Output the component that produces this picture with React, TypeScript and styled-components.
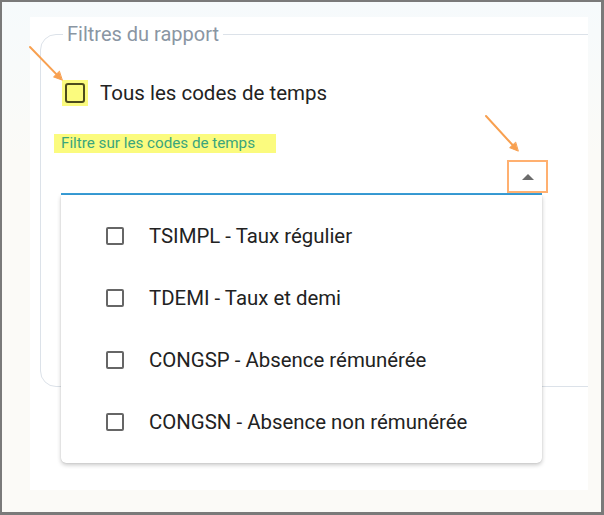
import { FC, ReactElement } from 'react';
import styled, { createGlobalStyle } from 'styled-components';

const GlobalStyle = createGlobalStyle`
    html, body {
        margin: 0;
        padding: 0;
        background: #ffffff;
    }
    * {
        box-sizing: border-box;
    }
`;

const codes: string[] = [
    'TSIMPL - Taux régulier',
    'TDEMI - Taux et demi',
    'CONGSP - Absence rémunérée',
    'CONGSN - Absence non rémunérée',
];

const Frame = styled('div')((): any => ({
    position: 'relative',
    width: '604px',
    height: '515px',
    border: '2px solid #7a7a7a',
    borderRightWidth: '3px',
    borderBottomWidth: '3px',
    background: 'linear-gradient(180deg, #f6fafc 0%, #fbfaf7 30%, #fbfaf7 100%)',
    padding: '15px 0 0 28px',
    fontFamily: 'Roboto, "Noto Sans", sans-serif',
}));

const Panel = styled('div')((): any => ({
    position: 'relative',
    width: '558px',
    height: '473px',
    background: '#ffffff',
    overflow: 'hidden',
    paddingTop: '6px',
    paddingLeft: '10px',
}));

const Fieldset = styled('fieldset')((): any => ({
    margin: 0,
    padding: '0 0 0 13px',
    width: '600px',
    height: '364px',
    border: '1px solid #dce2e9',
    borderRadius: '16px',
    minWidth: 0,
}));

const Legend = styled('legend')((): any => ({
    marginLeft: '9px',
    padding: '0 4px',
    fontSize: '20px',
    lineHeight: '22px',
    color: '#8a96a3',
}));

const CheckRow = styled('div')((): any => ({
    display: 'flex',
    alignItems: 'center',
    marginTop: '35px',
    marginLeft: '8px',
    gap: '12px',
}));

const Highlight = styled('span')((): any => ({
    display: 'inline-flex',
    alignItems: 'center',
    justifyContent: 'center',
    background: '#fbfb7e',
}));

const MarkedBox = styled('span')((): any => ({
    display: 'block',
    width: '20px',
    height: '20px',
    border: '2.5px solid #4c4c1c',
    borderRadius: '3px',
    margin: '3px',
}));

const CheckText = styled('span')((): any => ({
    fontSize: '20.5px',
    color: '#222222',
}));

const FilterField = styled('div')((): any => ({
    position: 'relative',
    marginTop: '27px',
}));

const FieldLabel = styled('span')((): any => ({
    display: 'inline-block',
    padding: '2px 21px 3px 7px',
    background: '#fbfb7e',
    fontSize: '15.2px',
    lineHeight: '14px',
    color: '#3aa57c',
}));

const SelectBox = styled('div')((): any => ({
    position: 'relative',
    display: 'flex',
    justifyContent: 'flex-end',
    alignItems: 'flex-end',
    marginLeft: '7px',
    marginTop: '4px',
    width: '481px',
    height: '38px',
    borderBottom: '2px solid #399fd9',
}));

const ArrowButton = styled('span')((): any => ({
    display: 'flex',
    alignItems: 'center',
    justifyContent: 'center',
    width: '41px',
    height: '33px',
    marginRight: '-6px',
    border: '2px solid #ffb070',
}));

const Caret = styled('span')((): any => ({
    width: 0,
    height: 0,
    borderLeft: '6px solid transparent',
    borderRight: '6px solid transparent',
    borderBottom: '6px solid #6b6b6b',
}));

const Menu = styled('ul')((): any => ({
    position: 'absolute',
    top: '100%',
    left: '7px',
    width: '481px',
    margin: 0,
    padding: '10px 0 10px 0',
    listStyle: 'none',
    background: '#ffffff',
    borderRadius: '0 0 5px 5px',
    boxShadow: '0 2px 4px rgba(0,0,0,0.22), 0 0 1px rgba(0,0,0,0.2)',
    zIndex: 2,
}));

const MenuItem = styled('li')((): any => ({
    display: 'flex',
    alignItems: 'center',
    height: '62px',
    paddingLeft: '45px',
    gap: '25px',
    fontSize: '20.4px',
    color: '#222222',
}));

const Box = styled('span')((): any => ({
    display: 'block',
    width: '18px',
    height: '18px',
    border: '2px solid #666666',
    borderRadius: '2px',
}));

const Pointers = styled('svg')((): any => ({
    position: 'absolute',
    left: '-2px',
    top: '-2px',
    pointerEvents: 'none',
    zIndex: 3,
}));

const Pointer: FC<{ x1: number; y1: number; x2: number; y2: number }> = (props): ReactElement => {
    const { x1, y1, x2, y2 } = props;
    const angle = Math.atan2(y2 - y1, x2 - x1);
    const size = 9;
    const a1 = angle + Math.PI - 0.45;
    const a2 = angle + Math.PI + 0.45;

    return (
        <g stroke="#f8a050" strokeWidth={2} fill="#f8a050" strokeLinecap="round">
            <line x1={x1} y1={y1} x2={x2 - Math.cos(angle) * 4} y2={y2 - Math.sin(angle) * 4} />
            <polygon
                strokeWidth={1}
                points={`${x2},${y2} ${x2 + Math.cos(a1) * size},${y2 + Math.sin(a1) * size} ${x2 + Math.cos(a2) * size},${y2 + Math.sin(a2) * size}`}
            />
        </g>
    );
};

const App: FC = (): ReactElement => {
    return (
        <>
            <GlobalStyle />
            <Frame>
                <Panel>
                    <Fieldset>
                        <Legend>Filtres du rapport</Legend>
                        <CheckRow>
                            <Highlight>
                                <MarkedBox />
                            </Highlight>
                            <CheckText>Tous les codes de temps</CheckText>
                        </CheckRow>
                        <FilterField>
                            <FieldLabel>Filtre sur les codes de temps</FieldLabel>
                            <SelectBox>
                                <ArrowButton>
                                    <Caret />
                                </ArrowButton>
                            </SelectBox>
                            <Menu>
                                {codes.map((code) => (
                                    <MenuItem key={code}>
                                        <Box />
                                        <span>{code}</span>
                                    </MenuItem>
                                ))}
                            </Menu>
                        </FilterField>
                    </Fieldset>
                </Panel>
                <Pointers width="604" height="515">
                    <Pointer x1={30} y1={47} x2={62} y2={80} />
                    <Pointer x1={486} y1={116} x2={518} y2={151} />
                </Pointers>
            </Frame>
        </>
    );
};

export default App;
